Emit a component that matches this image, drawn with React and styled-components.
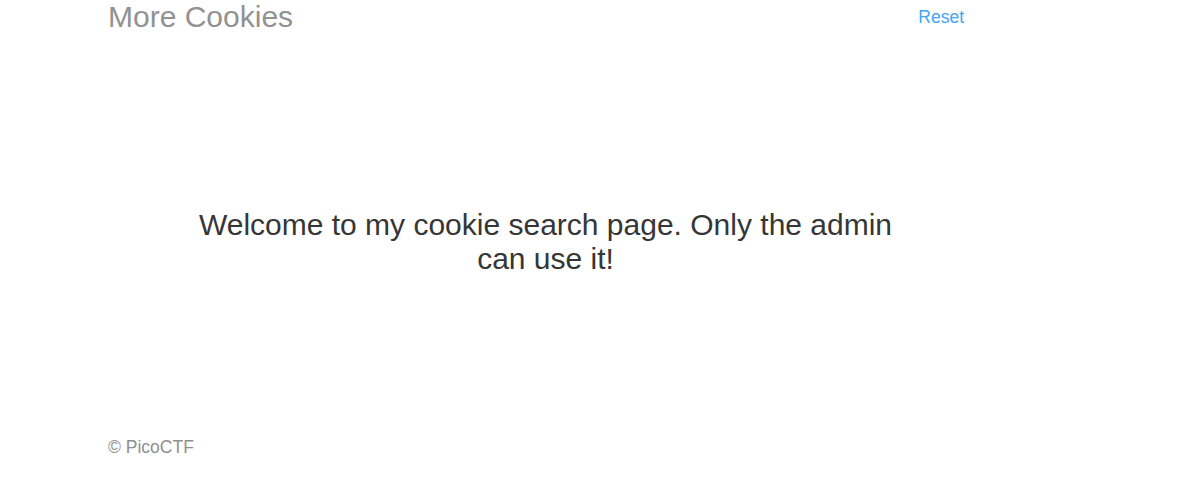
import styled, { createGlobalStyle } from "styled-components";

const GlobalStyle = createGlobalStyle`
  html, body {
    margin: 0;
    padding: 0;
    background: #ffffff;
  }
  body {
    font-family: "Liberation Sans", Arial, sans-serif;
    font-size: 17.5px;
    line-height: 1.43;
    color: #333333;
  }
`;

export default function App() {
  return (
    <>
      <GlobalStyle />
      <Container>
        <Header>
          <Title>More Cookies</Title>
          <Nav>
            <NavLink href="#">Reset</NavLink>
          </Nav>
        </Header>
        <Jumbotron>
          <Lead>Welcome to my cookie search page. Only the admin can use it!</Lead>
        </Jumbotron>
        <Footer>
          <p>© PicoCTF</p>
        </Footer>
      </Container>
    </>
  );
}

const Container = styled.div`
  display: flex;
  flex-direction: column;
  width: 875px;
  margin-left: 108px;
`;

const Header = styled.header`
  display: flex;
  justify-content: space-between;
  align-items: flex-start;
  height: 34px;
`;

const Title = styled.h3`
  margin: 0;
  font-size: 30px;
  font-weight: 400;
  line-height: 33px;
  color: #929292;
`;

const Nav = styled.nav`
  display: flex;
  padding-top: 5px;
`;

const NavLink = styled.a`
  display: block;
  padding: 0 19px;
  line-height: 25px;
  font-size: 17.5px;
  color: #42a5f5;
  text-decoration: none;
`;

const Jumbotron = styled.section`
  margin-top: 174px;
  padding: 0 75px;
  text-align: center;
`;

const Lead = styled.h3`
  margin: 0;
  font-size: 30px;
  font-weight: 400;
  line-height: 34px;
  color: #363636;
`;

const Footer = styled.footer`
  margin-top: 159px;
  font-size: 17.5px;
  line-height: 25px;
  color: #8f8f8f;

  & p {
    margin: 0;
  }
`;
